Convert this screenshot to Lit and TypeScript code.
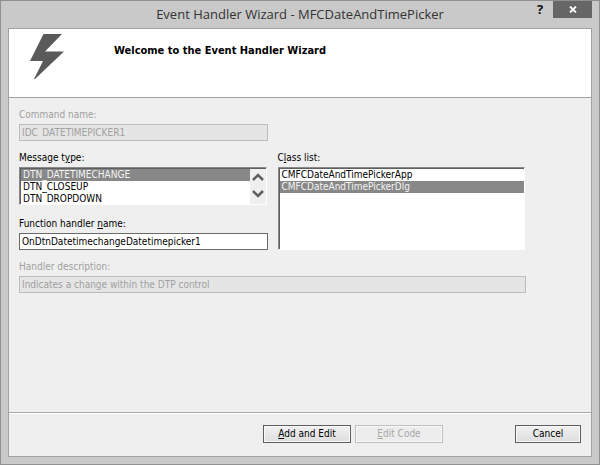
import { LitElement, html, css } from "lit";
import { customElement, property, state } from "lit/decorators.js";

@customElement("app-root")
export class AppRoot extends LitElement {
  @property() command = "IDC_DATETIMEPICKER1";
  @state() private messages = ["DTN_DATETIMECHANGE", "DTN_CLOSEUP", "DTN_DROPDOWN"];
  @state() private classes = ["CMFCDateAndTimePickerApp", "CMFCDateAndTimePickerDlg"];

  static styles = css`
    :host {
      display: flex;
      flex-direction: column;
      box-sizing: border-box;
      min-height: 100vh;
      padding: 0 7px 7px;
      border: 1px solid #909090;
      background: #c9c9c9;
      color: #000;
      font: 10px/14px "DejaVu Sans Condensed", "DejaVu Sans", sans-serif;
    }
    * {
      box-sizing: border-box;
    }
    .titlebar {
      display: grid;
      grid-template-columns: 1fr auto 1fr;
      height: 27px;
    }
    .title {
      grid-column: 2;
      margin: 0;
      color: #333;
      font: 400 13px/27px "Open Sans", "Noto Sans", sans-serif;
      white-space: nowrap;
    }
    .tools {
      display: flex;
      justify-content: flex-end;
      align-items: flex-start;
      gap: 5px;
    }
    .tool {
      display: flex;
      align-items: center;
      justify-content: center;
      width: 16px;
      height: 17px;
      padding: 0;
      border: 0;
      background: none;
      color: #111;
      font: 700 13px/17px "Open Sans", sans-serif;
    }
    .close {
      width: 39px;
      background: #666;
    }
    .client {
      flex: 1;
      display: flex;
      flex-direction: column;
      border: 1px solid #a2a2a2;
      background: #efefef;
    }
    .banner {
      display: flex;
      align-items: flex-start;
      gap: 50px;
      height: 69px;
      padding: 5px 20px;
      border-bottom: 1px solid #a2a2a2;
      background: #fff;
    }
    .bolt {
      width: 35px;
      height: 46px;
      flex: none;
    }
    .welcome {
      margin: 0;
      padding-top: 10px;
      font: inherit;
      font-size: 11px;
      font-weight: 700;
      white-space: nowrap;
    }
    .body {
      flex: 1;
      display: grid;
      grid-template-columns: 1fr 1fr;
      align-content: start;
      gap: 10px;
      padding: 10px 65px 10px 10px;
    }
    .column {
      display: flex;
      flex-direction: column;
      gap: 12px;
    }
    .field {
      display: flex;
      flex-direction: column;
      gap: 2px;
    }
    .left {
      grid-column: 1;
    }
    .wide {
      grid-column: 1 / -1;
    }
    .grow {
      flex: 1;
    }
    label {
      white-space: nowrap;
    }
    .muted label {
      color: #a0a0a0;
    }
    input {
      width: 100%;
      height: 17px;
      margin: 0;
      padding: 0 2px;
      border: 1px solid #6a6a6a;
      border-radius: 0;
      background: #fff;
      color: #000;
      font: inherit;
      outline: none;
    }
    input:disabled {
      border-color: #bcbcbc;
      background: #e5e5e5;
      color: #a0a0a0;
    }
    .listbox {
      display: flex;
      height: 38px;
      margin-right: 1px;
      border: 1px solid;
      border-color: #8a8a8a #fff #fff #8a8a8a;
      box-shadow: inset 1px 1px #5f5f5f;
      padding: 1px 0 0 1px;
      background: #fff;
    }
    .listbox.grow {
      height: auto;
    }
    select {
      flex: 1;
      min-width: 0;
      height: 100%;
      margin: 0;
      padding: 0;
      border: 0;
      border-radius: 0;
      background: #fff;
      color: #000;
      font: inherit;
      outline: none;
      overflow: hidden;
    }
    option {
      height: 12px;
      min-height: 0;
      padding: 0 2px;
      line-height: 11px;
      color: #000;
    }
    option:checked {
      background: #888 linear-gradient(#888, #888);
      color: #f4f4f4;
    }
    .scroller {
      display: flex;
      flex-direction: column;
      width: 16px;
      padding-bottom: 2px;
      background: #efefef;
    }
    .arrow {
      flex: 1;
      display: flex;
      align-items: center;
      justify-content: center;
      padding: 0;
      border: 0;
      background: none;
    }
    .footer {
      display: flex;
      gap: 4px;
      height: 44px;
      padding: 12px 10px 0;
      border-top: 1px solid #a8a8a8;
      box-shadow: inset 0 1px #fff;
    }
    .push {
      width: 88px;
      height: 18px;
      padding: 0;
      border: 1px solid #5e5e5e;
      border-radius: 0;
      background: linear-gradient(#f0f0f0, #dedede);
      box-shadow: inset 0 0 0 1px #f8f8f8;
      color: #000;
      font: inherit;
    }
    .push:disabled {
      border-color: #c0c0c0;
      background: #ededed;
      color: #a8a8a8;
    }
    .first {
      margin-left: auto;
    }
    .cancel {
      width: 66px;
      margin-left: 68px;
    }
  `;

  private scrollMessages(step: number) {
    this.renderRoot.querySelector<HTMLSelectElement>("#message")?.scrollBy(0, step * 12);
  }

  render() {
    return html`
      <header class="titlebar">
        <h1 class="title">Event Handler Wizard - MFCDateAndTimePicker</h1>
        <div class="tools">
          <button class="tool">?</button>
          <button class="tool close" aria-label="Close">
            <svg width="8" height="7" viewBox="0 0 8 7">
              <path d="M1 0.5L7 6.5M7 0.5L1 6.5" stroke="#fff" stroke-width="1.8" />
            </svg>
          </button>
        </div>
      </header>
      <main class="client">
        <section class="banner">
          <svg class="bolt" viewBox="0 0 35 46">
            <path d="M14.5 0H33L16 17.5H35L6 45H5L14 27H1Z" fill="#5a5a5a" />
          </svg>
          <h2 class="welcome">Welcome to the Event Handler Wizard</h2>
        </section>
        <form class="body" @submit=${(e: Event) => e.preventDefault()}>
          <div class="field muted left">
            <label for="command">Command name:</label>
            <input id="command" disabled .value=${this.command} />
          </div>
          <div class="column left">
            <div class="field">
              <label for="message">Message t<u>y</u>pe:</label>
              <div class="listbox">
                <select id="message" size="3">
                  ${this.messages.map((m, i) => html`<option ?selected=${i === 0}>${m}</option>`)}
                </select>
                <div class="scroller">
                  <button type="button" class="arrow" aria-label="Scroll up" @click=${() => this.scrollMessages(-1)}>
                    <svg width="12" height="8" viewBox="0 0 12 8">
                      <path d="M1 7L6 2L11 7" fill="none" stroke="#606060" stroke-width="2.6" />
                    </svg>
                  </button>
                  <button type="button" class="arrow" aria-label="Scroll down" @click=${() => this.scrollMessages(1)}>
                    <svg width="12" height="8" viewBox="0 0 12 8">
                      <path d="M1 1L6 6L11 1" fill="none" stroke="#606060" stroke-width="2.6" />
                    </svg>
                  </button>
                </div>
              </div>
            </div>
            <div class="field">
              <label for="handler">Function handler <u>n</u>ame:</label>
              <input id="handler" value="OnDtnDatetimechangeDatetimepicker1" />
            </div>
          </div>
          <div class="column">
            <div class="field grow">
              <label for="classes">C<u>l</u>ass list:</label>
              <div class="listbox grow">
                <select id="classes" size="5">
                  ${this.classes.map((c, i) => html`<option ?selected=${i === 1}>${c}</option>`)}
                </select>
              </div>
            </div>
          </div>
          <div class="field muted wide">
            <label for="description">Handler description:</label>
            <input id="description" disabled value="Indicates a change within the DTP control" />
          </div>
        </form>
        <footer class="footer">
          <button class="push first"><u>A</u>dd and Edit</button>
          <button class="push" disabled><u>E</u>dit Code</button>
          <button class="push cancel">Cancel</button>
        </footer>
      </main>
    `;
  }
}
